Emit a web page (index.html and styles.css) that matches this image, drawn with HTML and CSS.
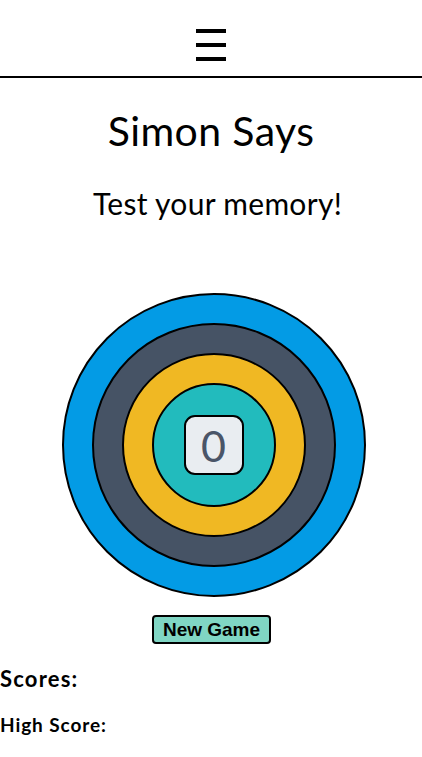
FILE: index.html
```html
<!DOCTYPE html>
<html lang="en">
<head>
<meta charset="utf-8">
<title>Simon Says</title>
<link rel="stylesheet" href="styles.css">
</head>
<body>
<header class="topbar">
  <button class="menu" aria-label="Menu">
    <span></span><span></span><span></span>
  </button>
</header>
<main class="main">
  <h1 class="title">Simon Says</h1>
  <p class="subtitle">Test your memory!</p>
  <div class="board">
    <div class="ring ring-blue">
      <div class="ring ring-dark">
        <div class="ring ring-yellow">
          <div class="ring ring-teal">
            <div class="counter">0</div>
          </div>
        </div>
      </div>
    </div>
  </div>
  <div class="actions">
    <button class="new-game">New Game</button>
  </div>
  <section class="scores">
    <h2 class="scores-title">Scores:</h2>
    <h3 class="high-score">High Score:</h3>
  </section>
</main>
</body>
</html>
```
FILE: styles.css
```css
* { box-sizing: border-box; }
body {
  margin: 0;
  font-family: Lato, "Noto Sans", sans-serif;
  color: #000;
  background: #fff;
}
.topbar {
  height: 78px;
  border-bottom: 2px solid #000;
  display: flex;
  justify-content: center;
  padding-top: 29px;
}
.menu {
  width: 30px;
  height: 32px;
  padding: 0;
  border: 0;
  background: none;
  display: flex;
  flex-direction: column;
  justify-content: space-between;
}
.menu span {
  display: block;
  width: 30px;
  height: 4px;
  background: #000;
}
.main {
  display: flex;
  flex-direction: column;
}
.title {
  margin: 29px 0 0;
  text-align: center;
  font-size: 41px;
  font-weight: 400;
  line-height: 48px;
  letter-spacing: 0.4px;
}
.subtitle {
  margin: 30px 0 0;
  padding-left: 13px;
  text-align: center;
  font-size: 30px;
  line-height: 36px;
  letter-spacing: 0.3px;
}
.board {
  display: flex;
  justify-content: center;
  padding-left: 5px;
  margin-top: 72px;
}
.ring {
  border: 2px solid #000;
  border-radius: 50%;
  display: flex;
  align-items: center;
  justify-content: center;
}
.ring-blue { width: 304px; height: 304px; background: #039be5; }
.ring-dark { width: 244px; height: 244px; background: #465365; }
.ring-yellow { width: 184px; height: 184px; background: #f0b823; }
.ring-teal { width: 124px; height: 124px; background: #22bbbd; }
.counter {
  width: 60px;
  height: 60px;
  border: 2px solid #000;
  border-radius: 11px;
  background: #e9edf1;
  color: #4a5568;
  font-size: 43px;
  font-weight: 400;
  display: flex;
  align-items: center;
  justify-content: center;
}
.actions {
  display: flex;
  justify-content: center;
  padding-left: 1px;
  margin-top: 18px;
}
.new-game {
  width: 119px;
  height: 29px;
  padding: 0;
  border: 2px solid #000;
  border-radius: 4px;
  background: #80d6c4;
  font-family: "Liberation Sans", Arial, sans-serif;
  font-weight: 700;
  font-size: 19px;
  color: #000;
}
.scores-title {
  margin: 21px 0 0;
  font-size: 22px;
  font-weight: 700;
  line-height: 28px;
  letter-spacing: 1.2px;
}
.high-score {
  margin: 21px 0 0;
  font-size: 19px;
  font-weight: 700;
  line-height: 22px;
  letter-spacing: 0.9px;
}
```
